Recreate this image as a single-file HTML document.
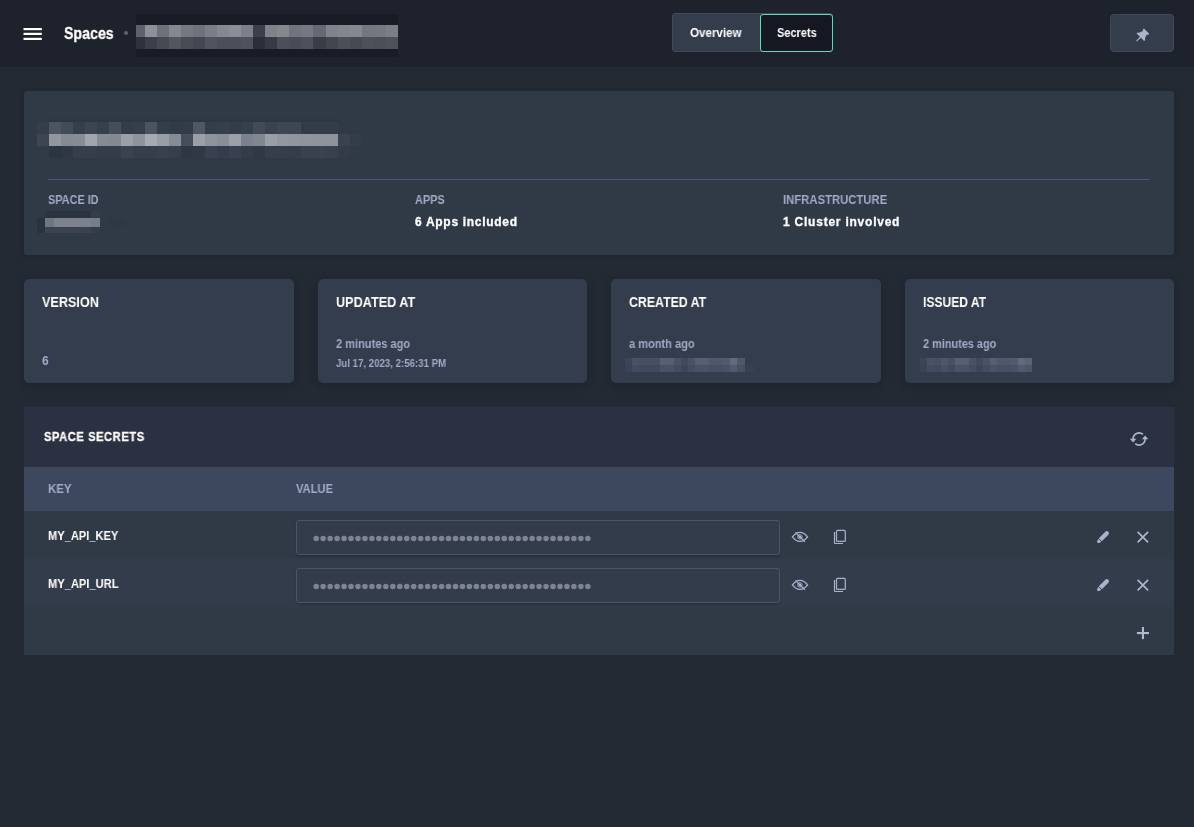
<!DOCTYPE html>
<html lang="en">
<head>
<meta charset="utf-8">
<title>Spaces - Secrets</title>
<style>
*{box-sizing:border-box;margin:0;padding:0}
html,body{width:1194px;height:827px;overflow:hidden}
body{background:#232a34;font-family:"Liberation Sans",sans-serif;font-weight:bold;color:#fff;position:relative}
.abs{position:absolute}
.t{position:absolute;white-space:nowrap;line-height:1;transform-origin:0 0;will-change:transform}
header{position:absolute;left:0;top:0;width:1194px;height:67px;background:#1e222c}
.tabs{position:absolute;left:672px;top:13px;width:161px;height:39px;border:1px solid #414a5c;border-radius:3px;background:#333d4c}
.tab-active{position:absolute;left:760px;top:14px;width:73px;height:38px;border:1px solid #5fd9b7;border-radius:3px;background:#151822}
.pinbtn{position:absolute;left:1110px;top:14px;width:64px;height:38px;border:1px solid #414a5c;border-radius:4px;background:#333d4c}
.panel{position:absolute;left:24px;top:91px;width:1150px;height:164px;background:#303a46;border-radius:3px;box-shadow:0 1px 5px rgba(10,14,22,.22)}
.hr{position:absolute;left:48px;top:179px;width:1102px;height:1px;background:#4a5a78}
.lbl{color:#a0acc6}
.hv{-webkit-text-stroke:.3px #fff}
.card{position:absolute;top:279px;width:270px;height:104px;background:#333d4d;border-radius:5px;box-shadow:0 2px 8px rgba(10,14,22,.25)}
.muted{color:#a0abc5}
.secrets{position:absolute;left:24px;top:407px;width:1150px;height:248px;background:#303a46}
.s-head{position:absolute;left:0;top:0;width:1150px;height:60px;background:#2b3142}
.s-th{position:absolute;left:0;top:60px;width:1150px;height:44px;background:#3d485e}
.s-r1{position:absolute;left:0;top:104px;width:1150px;height:48px;background:#303a46}
.s-r2{position:absolute;left:0;top:152px;width:1150px;height:48px;background:#333c4b}
.s-r3{position:absolute;left:0;top:200px;width:1150px;height:48px;background:#303a46}
.inp{position:absolute;left:296px;width:484px;height:35px;border:1px solid #4b5468;border-radius:3px;background:#333c4a;box-shadow:0 2px 3px -1px rgba(15,20,30,.4)}
svg{position:absolute;left:0;top:0;overflow:visible}
</style>
</head>
<body>
<header></header>
<nav>
  <div class="tabs"></div>
  <div class="tab-active"></div>
  <span class="t hv" id="t-spaces" style="left:64.2px;top:24.8px;font-size:17px;transform:scaleX(0.834)">Spaces</span>
  <span class="t" id="t-overview" style="left:689.9px;top:27px;font-size:12px;transform:scaleX(0.967)">Overview</span>
  <span class="t" id="t-secrets" style="left:777px;top:27px;font-size:12px;transform:scaleX(0.914)">Secrets</span>
  <div class="pinbtn"></div>
</nav>

<section class="panel"></section>
<div class="hr"></div>
<span class="t lbl" id="t-spaceid" style="left:48px;top:194px;font-size:12px;transform:scaleX(0.907)">SPACE ID</span>
<span class="t lbl" id="t-apps" style="left:415px;top:194px;font-size:12px;transform:scaleX(0.906)">APPS</span>
<span class="t lbl" id="t-infra" style="left:783.4px;top:194px;font-size:12px;transform:scaleX(0.941)">INFRASTRUCTURE</span>
<span class="t hv" id="t-appsv" style="left:415.4px;top:216px;font-size:12px;letter-spacing:.7px">6 Apps included</span>
<span class="t hv" id="t-infrav" style="left:783.4px;top:216px;font-size:12px;letter-spacing:.77px">1 Cluster involved</span>

<div class="card" style="left:24px"></div>
<div class="card" style="left:318px;width:269px"></div>
<div class="card" style="left:611px"></div>
<div class="card" style="left:905px;width:269px"></div>
<span class="t" id="t-version" style="left:42.2px;top:295.2px;font-size:14px;transform:scaleX(0.902)">VERSION</span>
<span class="t" id="t-updated" style="left:335.6px;top:295.2px;font-size:14px;transform:scaleX(0.904)">UPDATED AT</span>
<span class="t" id="t-created" style="left:628.9px;top:295.2px;font-size:14px;transform:scaleX(0.881)">CREATED AT</span>
<span class="t" id="t-issued" style="left:922.9px;top:295.2px;font-size:14px;transform:scaleX(0.863)">ISSUED AT</span>
<span class="t muted" id="t-six" style="left:42.2px;top:355px;font-size:12px">6</span>
<span class="t muted" id="t-upd1" style="left:335.6px;top:338px;font-size:12px;transform:scaleX(0.919)">2 minutes ago</span>
<span class="t muted" id="t-upd2" style="left:335.6px;top:358.4px;font-size:10.5px;transform:scaleX(0.92)">Jul 17, 2023, 2:56:31 PM</span>
<span class="t muted" id="t-cre1" style="left:628.9px;top:338px;font-size:12px;transform:scaleX(0.92)">a month ago</span>
<span class="t muted" id="t-iss1" style="left:922.9px;top:338px;font-size:12px;transform:scaleX(0.909)">2 minutes ago</span>

<section class="secrets">
  <div class="s-head"></div>
  <div class="s-th"></div>
  <div class="s-r1"></div>
  <div class="s-r2"></div>
  <div class="s-r3"></div>
</section>
<span class="t hv" id="t-ss" style="left:43.6px;top:431px;font-size:12px;letter-spacing:.6px;transform:scaleX(0.93)">SPACE SECRETS</span>
<span class="t lbl" id="t-key" style="left:48.2px;top:483px;font-size:12px;transform:scaleX(0.95)">KEY</span>
<span class="t lbl" id="t-value" style="left:296px;top:483px;font-size:12px;transform:scaleX(0.93)">VALUE</span>
<span class="t" id="t-k1" style="left:48.2px;top:530px;font-size:12px;transform:scaleX(0.925)">MY_API_KEY</span>
<span class="t" id="t-k2" style="left:48.2px;top:578px;font-size:12px;transform:scaleX(0.928)">MY_API_URL</span>
<div class="inp" style="top:520px"></div>
<div class="inp" style="top:568px"></div>

<svg id="gfx" width="1194" height="827" viewBox="0 0 1194 827">
<g fill="#fff"><rect x="23.5" y="28" width="18.3" height="2.2"/><rect x="23.5" y="32.8" width="18.3" height="2.2"/><rect x="23.5" y="37.8" width="18.3" height="2.2"/></g>
<circle cx="126" cy="33" r="2.1" fill="#596178"/>
<g shape-rendering="crispEdges">
<rect x="136" y="13.8" width="262" height="43.2" fill="#181c27"/>
<rect x="136" y="24.5" width="8.5" height="12.3" fill="#5d616b"/><rect x="136" y="36.8" width="8.5" height="12.2" fill="#2e323d"/>
<rect x="144.5" y="24.5" width="12.07" height="12.3" fill="#8d9099"/>
<rect x="156.57" y="24.5" width="12.07" height="12.3" fill="#6e717a"/>
<rect x="168.64" y="24.5" width="12.07" height="12.3" fill="#85888f"/>
<rect x="180.71" y="24.5" width="12.07" height="12.3" fill="#757880"/>
<rect x="192.78" y="24.5" width="12.07" height="12.3" fill="#6f727b"/>
<rect x="204.85" y="24.5" width="12.07" height="12.3" fill="#7a7d86"/>
<rect x="216.92" y="24.5" width="12.07" height="12.3" fill="#858890"/>
<rect x="228.99" y="24.5" width="12.07" height="12.3" fill="#8b8e96"/>
<rect x="241.06" y="24.5" width="12.07" height="12.3" fill="#7d8089"/>
<rect x="253.13" y="24.5" width="12.07" height="12.3" fill="#3c3f49"/>
<rect x="265.2" y="24.5" width="12.07" height="12.3" fill="#7f828b"/>
<rect x="277.27" y="24.5" width="12.07" height="12.3" fill="#85888f"/>
<rect x="289.34" y="24.5" width="12.07" height="12.3" fill="#71747d"/>
<rect x="301.41" y="24.5" width="12.07" height="12.3" fill="#757881"/>
<rect x="313.48" y="24.5" width="12.07" height="12.3" fill="#666973"/>
<rect x="325.55" y="24.5" width="12.07" height="12.3" fill="#80838c"/>
<rect x="337.62" y="24.5" width="12.07" height="12.3" fill="#83868e"/>
<rect x="349.69" y="24.5" width="12.07" height="12.3" fill="#85888f"/>
<rect x="361.76" y="24.5" width="12.07" height="12.3" fill="#74777e"/>
<rect x="373.83" y="24.5" width="12.07" height="12.3" fill="#75787f"/>
<rect x="385.9" y="24.5" width="12.07" height="12.3" fill="#7b7e86"/>
<rect x="144.5" y="36.8" width="12.07" height="12.2" fill="#3b3f4a"/>
<rect x="156.57" y="36.8" width="12.07" height="12.2" fill="#464a54"/>
<rect x="168.64" y="36.8" width="12.07" height="12.2" fill="#52565f"/>
<rect x="180.71" y="36.8" width="12.07" height="12.2" fill="#484c56"/>
<rect x="192.78" y="36.8" width="12.07" height="12.2" fill="#434751"/>
<rect x="204.85" y="36.8" width="12.07" height="12.2" fill="#50545e"/>
<rect x="216.92" y="36.8" width="12.07" height="12.2" fill="#4b4f59"/>
<rect x="228.99" y="36.8" width="12.07" height="12.2" fill="#4b4f59"/>
<rect x="241.06" y="36.8" width="12.07" height="12.2" fill="#4e525c"/>
<rect x="253.13" y="36.8" width="12.07" height="12.2" fill="#2b2f3a"/>
<rect x="265.2" y="36.8" width="12.07" height="12.2" fill="#363a45"/>
<rect x="277.27" y="36.8" width="12.07" height="12.2" fill="#4b4f59"/>
<rect x="289.34" y="36.8" width="12.07" height="12.2" fill="#484c56"/>
<rect x="301.41" y="36.8" width="12.07" height="12.2" fill="#4d515b"/>
<rect x="313.48" y="36.8" width="12.07" height="12.2" fill="#393d48"/>
<rect x="325.55" y="36.8" width="12.07" height="12.2" fill="#42464f"/>
<rect x="337.62" y="36.8" width="12.07" height="12.2" fill="#4b4f59"/>
<rect x="349.69" y="36.8" width="12.07" height="12.2" fill="#464a54"/>
<rect x="361.76" y="36.8" width="12.07" height="12.2" fill="#4c5059"/>
<rect x="373.83" y="36.8" width="12.07" height="12.2" fill="#4a4e58"/>
<rect x="385.9" y="36.8" width="12.07" height="12.2" fill="#4d515a"/>
</g>
<g shape-rendering="crispEdges">
<rect x="48.5" y="118.5" width="290" height="3.5" fill="#2d3643"/>
<rect x="36.5" y="122" width="12.04" height="12" fill="#343d4a"/>
<rect x="48.54" y="122" width="12.04" height="12" fill="#4c5462"/>
<rect x="60.58" y="122" width="12.04" height="12" fill="#434b58"/>
<rect x="72.62" y="122" width="12.04" height="12" fill="#353e4b"/>
<rect x="84.66" y="122" width="12.04" height="12" fill="#3c4451"/>
<rect x="96.7" y="122" width="12.04" height="12" fill="#363f4c"/>
<rect x="108.74" y="122" width="12.04" height="12" fill="#454d5a"/>
<rect x="120.78" y="122" width="12.04" height="12" fill="#333c49"/>
<rect x="132.82" y="122" width="12.04" height="12" fill="#353e4b"/>
<rect x="144.86" y="122" width="12.04" height="12" fill="#4b5361"/>
<rect x="156.9" y="122" width="12.04" height="12" fill="#343d4a"/>
<rect x="168.94" y="122" width="12.04" height="12" fill="#313a47"/>
<rect x="180.98" y="122" width="12.04" height="12" fill="#323b48"/>
<rect x="193.02" y="122" width="12.04" height="12" fill="#4f5765"/>
<rect x="205.06" y="122" width="12.04" height="12" fill="#343d4a"/>
<rect x="217.1" y="122" width="12.04" height="12" fill="#363f4c"/>
<rect x="229.14" y="122" width="12.04" height="12" fill="#333c49"/>
<rect x="241.18" y="122" width="12.04" height="12" fill="#363f4c"/>
<rect x="253.22" y="122" width="12.04" height="12" fill="#424a58"/>
<rect x="265.26" y="122" width="12.04" height="12" fill="#3a4250"/>
<rect x="277.3" y="122" width="12.04" height="12" fill="#3e4654"/>
<rect x="289.34" y="122" width="12.04" height="12" fill="#3e4654"/>
<rect x="301.38" y="122" width="12.04" height="12" fill="#323b48"/>
<rect x="313.42" y="122" width="12.04" height="12" fill="#333c49"/>
<rect x="325.46" y="122" width="12.04" height="12" fill="#333c49"/>
<rect x="36.5" y="134" width="12.04" height="12" fill="#3d4552"/>
<rect x="48.54" y="134" width="12.04" height="12" fill="#9196a0"/>
<rect x="60.58" y="134" width="12.04" height="12" fill="#858b95"/>
<rect x="72.62" y="134" width="12.04" height="12" fill="#878d97"/>
<rect x="84.66" y="134" width="12.04" height="12" fill="#a0a5ae"/>
<rect x="96.7" y="134" width="12.04" height="12" fill="#858b95"/>
<rect x="108.74" y="134" width="12.04" height="12" fill="#838993"/>
<rect x="120.78" y="134" width="12.04" height="12" fill="#9a9fa8"/>
<rect x="132.82" y="134" width="12.04" height="12" fill="#8e939d"/>
<rect x="144.86" y="134" width="12.04" height="12" fill="#a6aab3"/>
<rect x="156.9" y="134" width="12.04" height="12" fill="#989da6"/>
<rect x="168.94" y="134" width="12.04" height="12" fill="#868c96"/>
<rect x="180.98" y="134" width="12.04" height="12" fill="#464e5b"/>
<rect x="193.02" y="134" width="12.04" height="12" fill="#9a9fa8"/>
<rect x="205.06" y="134" width="12.04" height="12" fill="#8e939d"/>
<rect x="217.1" y="134" width="12.04" height="12" fill="#898f98"/>
<rect x="229.14" y="134" width="12.04" height="12" fill="#9a9fa8"/>
<rect x="241.18" y="134" width="12.04" height="12" fill="#7c828d"/>
<rect x="253.22" y="134" width="12.04" height="12" fill="#818791"/>
<rect x="265.26" y="134" width="12.04" height="12" fill="#999ea7"/>
<rect x="277.3" y="134" width="12.04" height="12" fill="#92979f"/>
<rect x="289.34" y="134" width="12.04" height="12" fill="#90959e"/>
<rect x="301.38" y="134" width="12.04" height="12" fill="#8f949d"/>
<rect x="313.42" y="134" width="12.04" height="12" fill="#8e939c"/>
<rect x="325.46" y="134" width="12.04" height="12" fill="#8e939c"/>
<rect x="337.5" y="134" width="12.04" height="12" fill="#3a4250"/>
<rect x="349.54" y="134" width="12.04" height="12" fill="#333c49"/>
<rect x="36.5" y="146" width="12.04" height="12" fill="#313a47"/>
<rect x="48.54" y="146" width="12.04" height="12" fill="#2b3441"/>
<rect x="60.58" y="146" width="12.04" height="12" fill="#2e3744"/>
<rect x="72.62" y="146" width="12.04" height="12" fill="#363e4c"/>
<rect x="84.66" y="146" width="12.04" height="12" fill="#363e4c"/>
<rect x="96.7" y="146" width="12.04" height="12" fill="#343c4a"/>
<rect x="108.74" y="146" width="12.04" height="12" fill="#343c4a"/>
<rect x="120.78" y="146" width="12.04" height="12" fill="#3a4250"/>
<rect x="132.82" y="146" width="12.04" height="12" fill="#363e4c"/>
<rect x="144.86" y="146" width="12.04" height="12" fill="#363e4c"/>
<rect x="156.9" y="146" width="12.04" height="12" fill="#384050"/>
<rect x="168.94" y="146" width="12.04" height="12" fill="#363e4c"/>
<rect x="180.98" y="146" width="12.04" height="12" fill="#2e3643"/>
<rect x="193.02" y="146" width="12.04" height="12" fill="#2f3845"/>
<rect x="205.06" y="146" width="12.04" height="12" fill="#394150"/>
<rect x="217.1" y="146" width="12.04" height="12" fill="#353d4b"/>
<rect x="229.14" y="146" width="12.04" height="12" fill="#394150"/>
<rect x="241.18" y="146" width="12.04" height="12" fill="#343c4a"/>
<rect x="253.22" y="146" width="12.04" height="12" fill="#2f3845"/>
<rect x="265.26" y="146" width="12.04" height="12" fill="#363e4c"/>
<rect x="277.3" y="146" width="12.04" height="12" fill="#363e4c"/>
<rect x="289.34" y="146" width="12.04" height="12" fill="#353d4b"/>
<rect x="301.38" y="146" width="12.04" height="12" fill="#3a4250"/>
<rect x="313.42" y="146" width="12.04" height="12" fill="#3a4250"/>
<rect x="325.46" y="146" width="12.04" height="12" fill="#384050"/>
<rect x="337.5" y="146" width="12.04" height="12" fill="#333b49"/>
</g>
<g shape-rendering="crispEdges">
<rect x="37" y="218" width="8" height="14.5" fill="#2a3240"/>
<rect x="45" y="211" width="9.1" height="7" fill="#2b3341"/>
<rect x="54.1" y="211" width="9.1" height="7" fill="#2b3341"/>
<rect x="63.2" y="211" width="9.1" height="7" fill="#2b3341"/>
<rect x="72.3" y="211" width="9.1" height="7" fill="#2b3341"/>
<rect x="81.4" y="211" width="9.1" height="7" fill="#2b3341"/>
<rect x="90.5" y="211" width="9.1" height="7" fill="#353b49"/>
<rect x="45" y="218" width="9.1" height="9" fill="#6e7682"/>
<rect x="54.1" y="218" width="9.1" height="9" fill="#7d838d"/>
<rect x="63.2" y="218" width="9.1" height="9" fill="#7d838d"/>
<rect x="72.3" y="218" width="9.1" height="9" fill="#7d838d"/>
<rect x="81.4" y="218" width="9.1" height="9" fill="#7a828d"/>
<rect x="90.5" y="218" width="9.1" height="9" fill="#757d89"/>
<rect x="45" y="227" width="9.1" height="5.6" fill="#3a4250"/>
<rect x="54.1" y="227" width="9.1" height="5.6" fill="#3a4250"/>
<rect x="63.2" y="227" width="9.1" height="5.6" fill="#3a4250"/>
<rect x="72.3" y="227" width="9.1" height="5.6" fill="#3a4250"/>
<rect x="81.4" y="227" width="9.1" height="5.6" fill="#3a4250"/>
<rect x="90.5" y="227" width="9.1" height="5.6" fill="#343b49"/>
<rect x="108" y="218" width="18" height="9" fill="#2e3744"/>
</g>
<g shape-rendering="crispEdges">
<rect x="625" y="357.5" width="7.03" height="7" fill="#3c4557"/>
<rect x="632.03" y="357.5" width="7.03" height="7" fill="#4a5365"/>
<rect x="639.06" y="357.5" width="7.03" height="7" fill="#465063"/>
<rect x="646.09" y="357.5" width="7.03" height="7" fill="#465063"/>
<rect x="653.12" y="357.5" width="7.03" height="7" fill="#465063"/>
<rect x="660.15" y="357.5" width="7.03" height="7" fill="#566073"/>
<rect x="667.18" y="357.5" width="7.03" height="7" fill="#566073"/>
<rect x="674.21" y="357.5" width="7.03" height="7" fill="#4a5365"/>
<rect x="681.24" y="357.5" width="7.03" height="7" fill="#404a5c"/>
<rect x="688.27" y="357.5" width="7.03" height="7" fill="#4a5365"/>
<rect x="695.3" y="357.5" width="7.03" height="7" fill="#566073"/>
<rect x="702.33" y="357.5" width="7.03" height="7" fill="#566073"/>
<rect x="709.36" y="357.5" width="7.03" height="7" fill="#4e586a"/>
<rect x="716.39" y="357.5" width="7.03" height="7" fill="#4e586a"/>
<rect x="723.42" y="357.5" width="7.03" height="7" fill="#515b6d"/>
<rect x="730.45" y="357.5" width="7.03" height="7" fill="#626b7c"/>
<rect x="737.48" y="357.5" width="7.03" height="7" fill="#4e586a"/>
<rect x="625" y="364.5" width="7.03" height="7" fill="#3a4355"/>
<rect x="632.03" y="364.5" width="7.03" height="7" fill="#434c5e"/>
<rect x="639.06" y="364.5" width="7.03" height="7" fill="#414a5c"/>
<rect x="646.09" y="364.5" width="7.03" height="7" fill="#414a5c"/>
<rect x="653.12" y="364.5" width="7.03" height="7" fill="#414a5c"/>
<rect x="660.15" y="364.5" width="7.03" height="7" fill="#4a5365"/>
<rect x="667.18" y="364.5" width="7.03" height="7" fill="#4a5365"/>
<rect x="674.21" y="364.5" width="7.03" height="7" fill="#444d5f"/>
<rect x="681.24" y="364.5" width="7.03" height="7" fill="#3d4658"/>
<rect x="688.27" y="364.5" width="7.03" height="7" fill="#444d5f"/>
<rect x="695.3" y="364.5" width="7.03" height="7" fill="#4a5365"/>
<rect x="702.33" y="364.5" width="7.03" height="7" fill="#4a5365"/>
<rect x="709.36" y="364.5" width="7.03" height="7" fill="#465063"/>
<rect x="716.39" y="364.5" width="7.03" height="7" fill="#465063"/>
<rect x="723.42" y="364.5" width="7.03" height="7" fill="#485264"/>
<rect x="730.45" y="364.5" width="7.03" height="7" fill="#515b6d"/>
<rect x="737.48" y="364.5" width="7.03" height="7" fill="#465063"/>
<rect x="744.5" y="364.5" width="9" height="7" fill="#373f50"/>
<rect x="920" y="357.5" width="7.02" height="7" fill="#3c4557"/>
<rect x="927.02" y="357.5" width="7.02" height="7" fill="#4a5365"/>
<rect x="934.04" y="357.5" width="7.02" height="7" fill="#465063"/>
<rect x="941.06" y="357.5" width="7.02" height="7" fill="#4e586a"/>
<rect x="948.08" y="357.5" width="7.02" height="7" fill="#465063"/>
<rect x="955.1" y="357.5" width="7.02" height="7" fill="#566073"/>
<rect x="962.12" y="357.5" width="7.02" height="7" fill="#566073"/>
<rect x="969.14" y="357.5" width="7.02" height="7" fill="#4a5365"/>
<rect x="976.16" y="357.5" width="7.02" height="7" fill="#404a5c"/>
<rect x="983.18" y="357.5" width="7.02" height="7" fill="#4a5365"/>
<rect x="990.2" y="357.5" width="7.02" height="7" fill="#566073"/>
<rect x="997.22" y="357.5" width="7.02" height="7" fill="#4e586a"/>
<rect x="1004.24" y="357.5" width="7.02" height="7" fill="#4e586a"/>
<rect x="1011.26" y="357.5" width="7.02" height="7" fill="#515b6d"/>
<rect x="1018.28" y="357.5" width="7.02" height="7" fill="#626b7c"/>
<rect x="1025.3" y="357.5" width="7.02" height="7" fill="#5a6476"/>
<rect x="920" y="364.5" width="7.02" height="7" fill="#3a4355"/>
<rect x="927.02" y="364.5" width="7.02" height="7" fill="#434c5e"/>
<rect x="934.04" y="364.5" width="7.02" height="7" fill="#414a5c"/>
<rect x="941.06" y="364.5" width="7.02" height="7" fill="#465063"/>
<rect x="948.08" y="364.5" width="7.02" height="7" fill="#414a5c"/>
<rect x="955.1" y="364.5" width="7.02" height="7" fill="#4a5365"/>
<rect x="962.12" y="364.5" width="7.02" height="7" fill="#4a5365"/>
<rect x="969.14" y="364.5" width="7.02" height="7" fill="#444d5f"/>
<rect x="976.16" y="364.5" width="7.02" height="7" fill="#3d4658"/>
<rect x="983.18" y="364.5" width="7.02" height="7" fill="#444d5f"/>
<rect x="990.2" y="364.5" width="7.02" height="7" fill="#4a5365"/>
<rect x="997.22" y="364.5" width="7.02" height="7" fill="#465063"/>
<rect x="1004.24" y="364.5" width="7.02" height="7" fill="#465063"/>
<rect x="1011.26" y="364.5" width="7.02" height="7" fill="#485264"/>
<rect x="1018.28" y="364.5" width="7.02" height="7" fill="#515b6d"/>
<rect x="1025.3" y="364.5" width="7.02" height="7" fill="#4c5668"/>
</g>
<g fill="#7e8590"><circle cx="316.20" cy="538.5" r="2.8"/><circle cx="323.16" cy="538.5" r="2.8"/><circle cx="330.13" cy="538.5" r="2.8"/><circle cx="337.09" cy="538.5" r="2.8"/><circle cx="344.06" cy="538.5" r="2.8"/><circle cx="351.02" cy="538.5" r="2.8"/><circle cx="357.99" cy="538.5" r="2.8"/><circle cx="364.95" cy="538.5" r="2.8"/><circle cx="371.92" cy="538.5" r="2.8"/><circle cx="378.88" cy="538.5" r="2.8"/><circle cx="385.85" cy="538.5" r="2.8"/><circle cx="392.81" cy="538.5" r="2.8"/><circle cx="399.78" cy="538.5" r="2.8"/><circle cx="406.75" cy="538.5" r="2.8"/><circle cx="413.71" cy="538.5" r="2.8"/><circle cx="420.67" cy="538.5" r="2.8"/><circle cx="427.64" cy="538.5" r="2.8"/><circle cx="434.61" cy="538.5" r="2.8"/><circle cx="441.57" cy="538.5" r="2.8"/><circle cx="448.53" cy="538.5" r="2.8"/><circle cx="455.50" cy="538.5" r="2.8"/><circle cx="462.46" cy="538.5" r="2.8"/><circle cx="469.43" cy="538.5" r="2.8"/><circle cx="476.39" cy="538.5" r="2.8"/><circle cx="483.36" cy="538.5" r="2.8"/><circle cx="490.32" cy="538.5" r="2.8"/><circle cx="497.29" cy="538.5" r="2.8"/><circle cx="504.25" cy="538.5" r="2.8"/><circle cx="511.22" cy="538.5" r="2.8"/><circle cx="518.18" cy="538.5" r="2.8"/><circle cx="525.15" cy="538.5" r="2.8"/><circle cx="532.12" cy="538.5" r="2.8"/><circle cx="539.08" cy="538.5" r="2.8"/><circle cx="546.04" cy="538.5" r="2.8"/><circle cx="553.01" cy="538.5" r="2.8"/><circle cx="559.98" cy="538.5" r="2.8"/><circle cx="566.94" cy="538.5" r="2.8"/><circle cx="573.90" cy="538.5" r="2.8"/><circle cx="580.87" cy="538.5" r="2.8"/><circle cx="587.84" cy="538.5" r="2.8"/></g>
<g fill="#7e8590"><circle cx="316.20" cy="586.5" r="2.8"/><circle cx="323.16" cy="586.5" r="2.8"/><circle cx="330.13" cy="586.5" r="2.8"/><circle cx="337.09" cy="586.5" r="2.8"/><circle cx="344.06" cy="586.5" r="2.8"/><circle cx="351.02" cy="586.5" r="2.8"/><circle cx="357.99" cy="586.5" r="2.8"/><circle cx="364.95" cy="586.5" r="2.8"/><circle cx="371.92" cy="586.5" r="2.8"/><circle cx="378.88" cy="586.5" r="2.8"/><circle cx="385.85" cy="586.5" r="2.8"/><circle cx="392.81" cy="586.5" r="2.8"/><circle cx="399.78" cy="586.5" r="2.8"/><circle cx="406.75" cy="586.5" r="2.8"/><circle cx="413.71" cy="586.5" r="2.8"/><circle cx="420.67" cy="586.5" r="2.8"/><circle cx="427.64" cy="586.5" r="2.8"/><circle cx="434.61" cy="586.5" r="2.8"/><circle cx="441.57" cy="586.5" r="2.8"/><circle cx="448.53" cy="586.5" r="2.8"/><circle cx="455.50" cy="586.5" r="2.8"/><circle cx="462.46" cy="586.5" r="2.8"/><circle cx="469.43" cy="586.5" r="2.8"/><circle cx="476.39" cy="586.5" r="2.8"/><circle cx="483.36" cy="586.5" r="2.8"/><circle cx="490.32" cy="586.5" r="2.8"/><circle cx="497.29" cy="586.5" r="2.8"/><circle cx="504.25" cy="586.5" r="2.8"/><circle cx="511.22" cy="586.5" r="2.8"/><circle cx="518.18" cy="586.5" r="2.8"/><circle cx="525.15" cy="586.5" r="2.8"/><circle cx="532.12" cy="586.5" r="2.8"/><circle cx="539.08" cy="586.5" r="2.8"/><circle cx="546.04" cy="586.5" r="2.8"/><circle cx="553.01" cy="586.5" r="2.8"/><circle cx="559.98" cy="586.5" r="2.8"/><circle cx="566.94" cy="586.5" r="2.8"/><circle cx="573.90" cy="586.5" r="2.8"/><circle cx="580.87" cy="586.5" r="2.8"/><circle cx="587.84" cy="586.5" r="2.8"/></g>
<g transform="translate(1136.43,41.23) rotate(-45)" fill="#aab5cd"><path d="M0 -0.5 L5.7 -0.75 L5.5 -5.3 L7 -5.4 Q8 -3.5 11.2 -2.85 L12.3 -2.95 L12.55 -3.75 L14.4 -3.75 L14.4 3.75 L12.55 3.75 L12.3 2.95 L11.2 2.85 Q8 3.5 7 5.4 L5.5 5.3 L5.7 0.75 L0 0.5 Z"/></g>
<g transform="translate(0,0)" fill="none" stroke="#a9b4cc" stroke-width="1.1"><path stroke-width="1.25" d="M792.4 536.9 C795 533.5 797.5 532.4 800 532.4 C802.5 532.4 805 533.5 807.6 536.9 C805 540.3 802.5 541.4 800 541.4 C797.5 541.4 795 540.3 792.4 536.9 Z"/><circle cx="799.9" cy="536.9" r="2.1" stroke-width="1"/><circle cx="799.9" cy="536.9" r="1.2" fill="#a9b4cc" stroke="none"/><path stroke-width="1.3" d="M795.4 532.4 L804.9 541.7"/><rect x="836.5" y="530.4" width="8.8" height="11" rx="1" stroke-width="1.2"/><path d="M834.5 531.9 V542.7 a0.8 0.8 0 0 0 0.8 0.8 H843" stroke-width="1.2"/></g>
<g transform="translate(1097.2,542.9) rotate(-45)" fill="#a9b4cc"><path d="M3.7 -2.15 L3.7 2.15 Q0.9 1.7 0.1 0 Q0.9 -1.7 3.7 -2.15 Z"/><path d="M4.4 -2.15 H13.6 a2.15 2.15 0 0 1 0 4.3 H4.4 Z"/></g>
<g transform="translate(0,0)" stroke="#adb7ce" stroke-width="1.65" fill="none"><path d="M1137.6 531.8 L1148.1 542.4 M1148.1 531.8 L1137.6 542.4"/></g>
<g transform="translate(0,48)" fill="none" stroke="#a9b4cc" stroke-width="1.1"><path stroke-width="1.25" d="M792.4 536.9 C795 533.5 797.5 532.4 800 532.4 C802.5 532.4 805 533.5 807.6 536.9 C805 540.3 802.5 541.4 800 541.4 C797.5 541.4 795 540.3 792.4 536.9 Z"/><circle cx="799.9" cy="536.9" r="2.1" stroke-width="1"/><circle cx="799.9" cy="536.9" r="1.2" fill="#a9b4cc" stroke="none"/><path stroke-width="1.3" d="M795.4 532.4 L804.9 541.7"/><rect x="836.5" y="530.4" width="8.8" height="11" rx="1" stroke-width="1.2"/><path d="M834.5 531.9 V542.7 a0.8 0.8 0 0 0 0.8 0.8 H843" stroke-width="1.2"/></g>
<g transform="translate(1097.2,590.9) rotate(-45)" fill="#a9b4cc"><path d="M3.7 -2.15 L3.7 2.15 Q0.9 1.7 0.1 0 Q0.9 -1.7 3.7 -2.15 Z"/><path d="M4.4 -2.15 H13.6 a2.15 2.15 0 0 1 0 4.3 H4.4 Z"/></g>
<g transform="translate(0,48)" stroke="#adb7ce" stroke-width="1.65" fill="none"><path d="M1137.6 531.8 L1148.1 542.4 M1148.1 531.8 L1137.6 542.4"/></g>
<g fill="#adb7ce"><rect x="1136.9" y="632" width="12.1" height="2.1"/><rect x="1141.9" y="627" width="2.1" height="12.1"/></g>
<g fill="none" stroke="#adb7ce" stroke-width="1.6"><path d="M1133.10 439 A6.0 6.0 0 0 1 1142.96 434.40"/><path d="M1145.10 439 A6.0 6.0 0 0 1 1135.24 443.60"/></g>
<g fill="#adb7ce"><path d="M1129.9 438.8 H1136.3 L1133.1 442.5 Z"/><path d="M1141.9 439.2 H1148.3 L1145.1 435.5 Z"/></g>
</svg>
</body>
</html>
